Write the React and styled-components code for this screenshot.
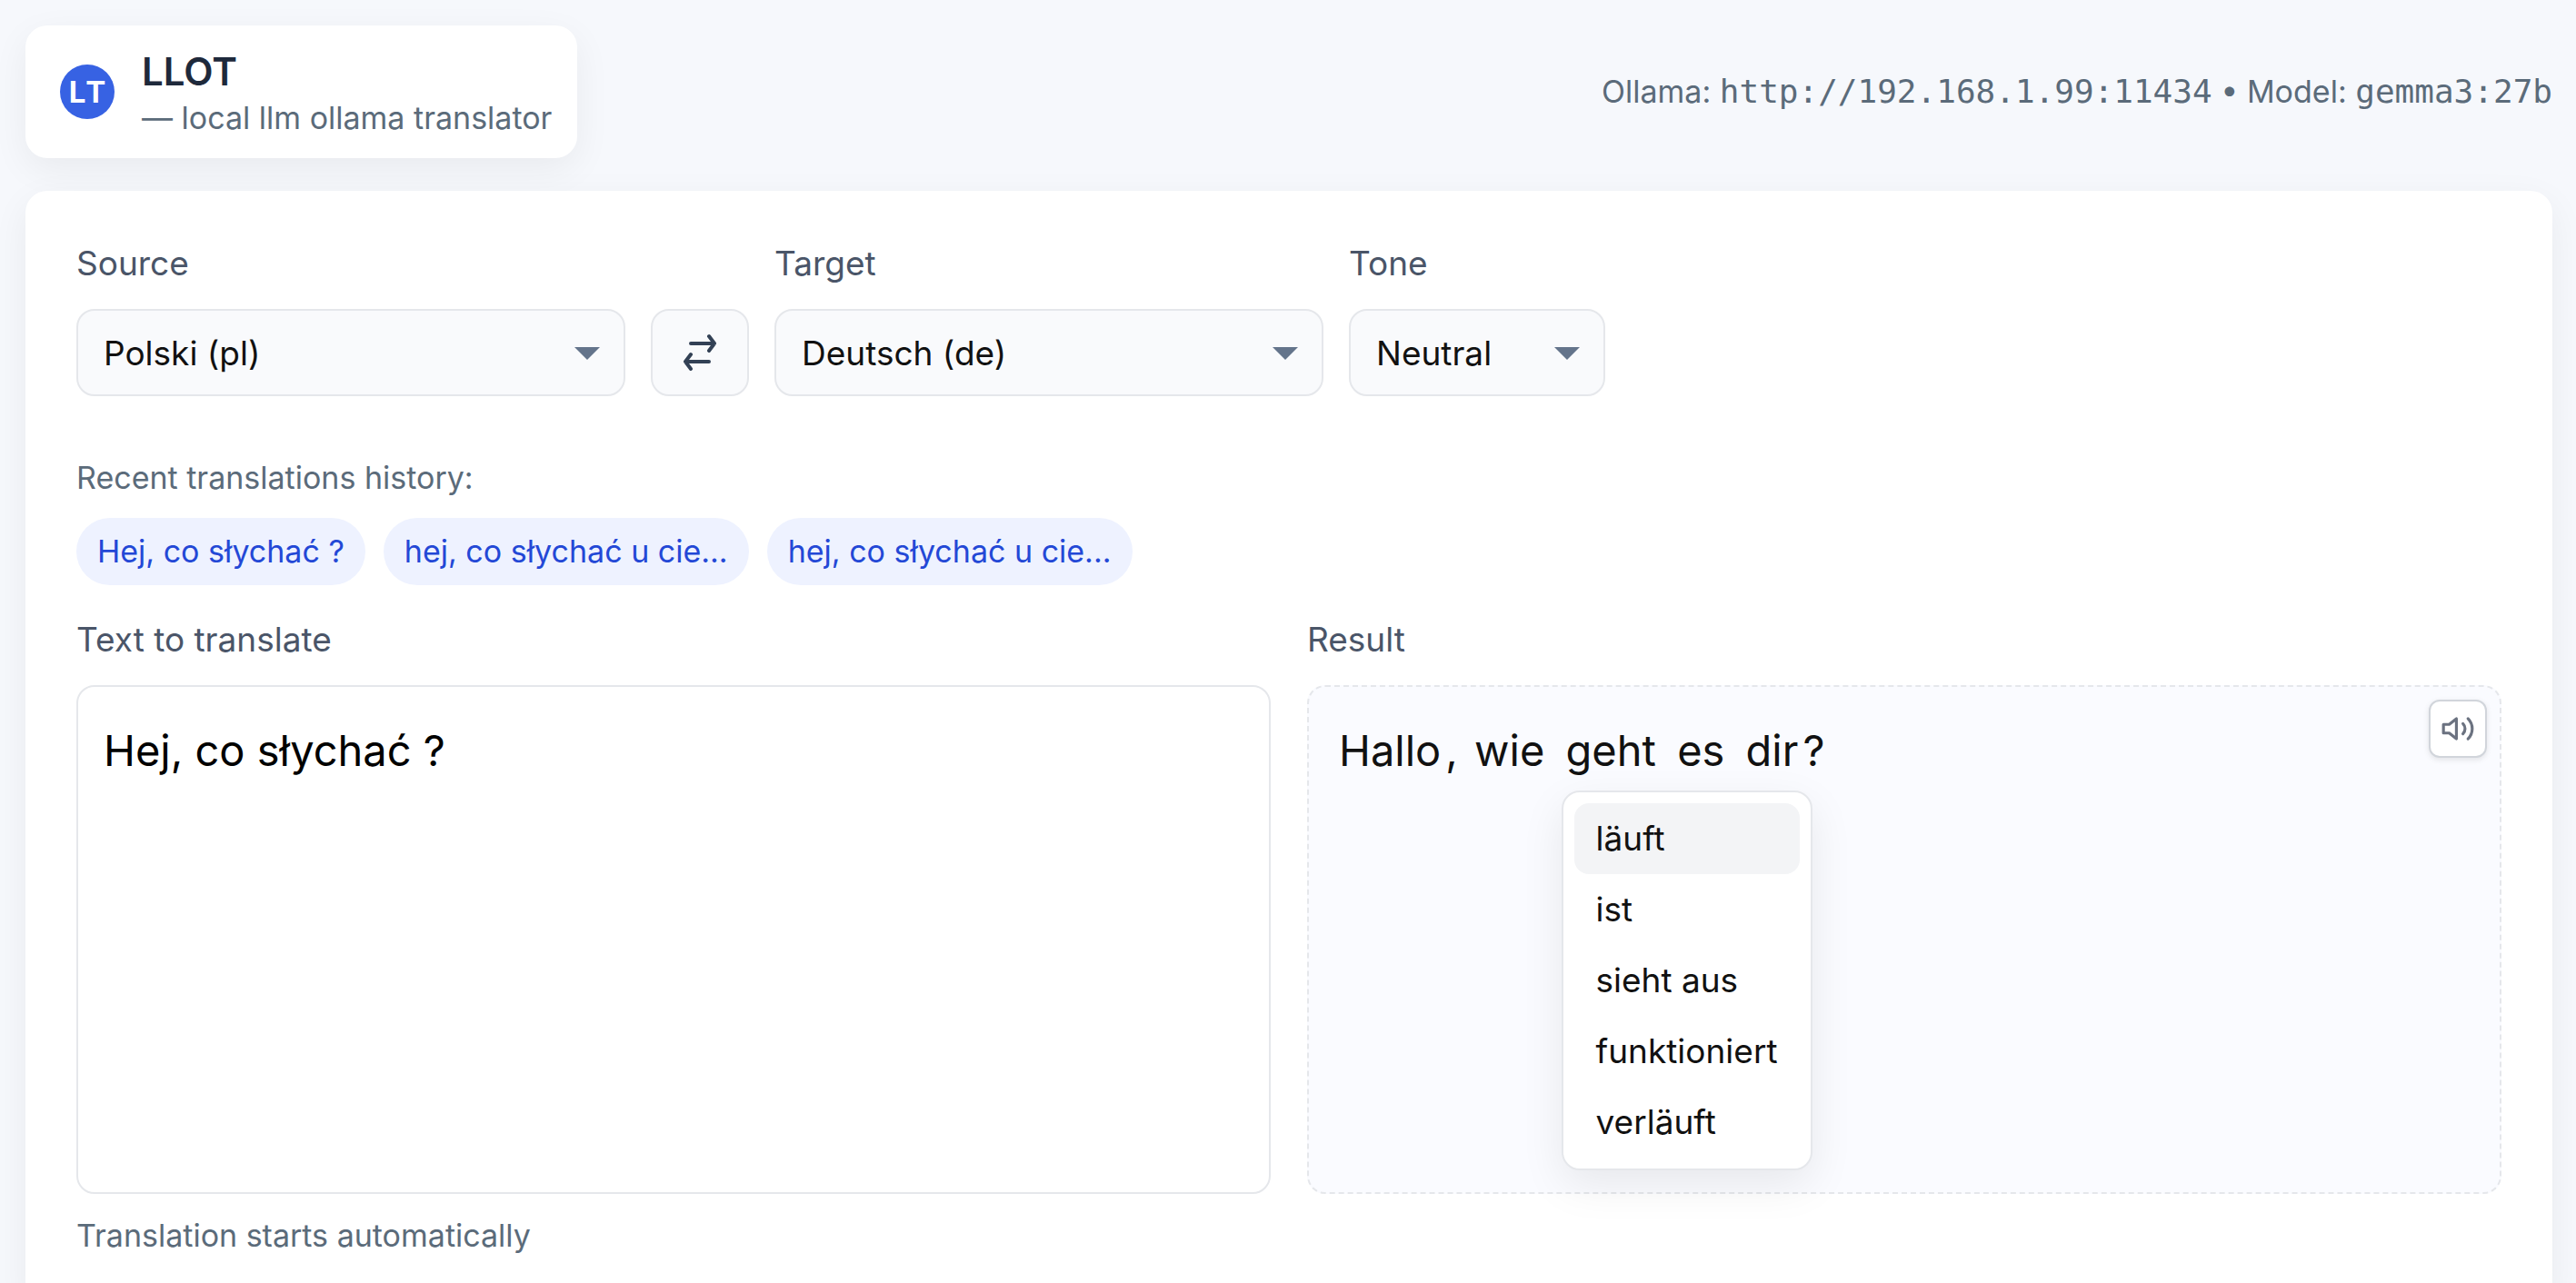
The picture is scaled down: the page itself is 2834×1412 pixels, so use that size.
import React, { useState } from "react";
import styled, { createGlobalStyle } from "styled-components";

const GlobalStyle = createGlobalStyle`
  *, *::before, *::after { box-sizing: border-box; }
  body {
    margin: 0;
    background: #f6f8fc;
    color: #111111;
    font-family: Inter, "Liberation Sans", sans-serif;
    font-size: 37px;
    line-height: 48px;
  }
  button, select, textarea { font: inherit; color: inherit; margin: 0; }
`;

const Page = styled.div`
  display: flex;
  flex-direction: column;
  gap: 36px;
  padding: 28px 26px 28px 28px;
  height: 100vh;
  overflow: hidden;
`;

const Header = styled.header`
  display: flex;
  flex: none;
  align-items: center;
  justify-content: space-between;
`;

const Brand = styled.div`
  display: flex;
  align-items: center;
  gap: 30px;
  height: 146px;
  padding: 0 28px 0 38px;
  background: #ffffff;
  border-radius: 24px;
  box-shadow: 0 12px 40px rgba(0, 0, 0, 0.06);
`;

const BrandText = styled.div`
  padding-top: 4px;
`;

const Logo = styled.div`
  display: grid;
  place-items: center;
  width: 60px;
  height: 60px;
  border-radius: 50%;
  background: #3762e3;
  color: #ffffff;
  font-size: 33px;
  font-weight: 700;
  font-kerning: none;
`;

const Title = styled.h1`
  margin: 0;
  color: #1e293b;
  font-size: 42px;
  font-weight: 600;
  line-height: 54px;
`;

const Muted = styled.p`
  margin: 0;
  color: #5b6b7a;
  font-size: 34px;
  line-height: 48px;
`;

const Code = styled.code`
  font-family: "DejaVu Sans Mono", monospace;
  font-size: 36px;
`;

const Panel = styled.main`
  flex: none;
  padding: 56px;
  background: #ffffff;
  border-radius: 24px;
  box-shadow: 0 12px 40px rgba(0, 0, 0, 0.06);
`;

const Controls = styled.div`
  display: flex;
  align-items: flex-end;
  gap: 28px;
`;

const Field = styled.div`
  display: flex;
  flex-direction: column;
  gap: 26px;
  width: ${(p) => p.$width || "auto"};
`;

const Label = styled.label`
  color: #4a5568;
`;

const SelectBox = styled.div`
  position: relative;

  &::after {
    content: "";
    position: absolute;
    right: 28px;
    top: 42px;
    border: 14px solid transparent;
    border-top-color: #64748b;
    border-bottom-width: 0;
    pointer-events: none;
  }
`;

const Select = styled.select`
  appearance: none;
  width: 100%;
  height: 96px;
  padding: 2px 28px 0;
  border: 2px solid #e5e7eb;
  border-radius: 20px;
  background: #f9fafc;
`;

const SwapButton = styled.button`
  display: grid;
  place-items: center;
  width: 108px;
  height: 96px;
  padding: 0;
  border: 2px solid #e5e7eb;
  border-radius: 20px;
  background: #f9fafc;
  color: #334155;
`;

const History = styled.section`
  display: flex;
  flex-direction: column;
  gap: 20px;
  padding: 66px 0 36px;
`;

const Chips = styled.div`
  display: flex;
  gap: 20px;
`;

const Chip = styled.button`
  height: 74px;
  padding: 0 23px;
  border: 0;
  border-radius: 37px;
  background: #eef2ff;
  color: #2348d6;
  font-size: 34px;
`;

const Columns = styled.div`
  display: grid;
  grid-template-columns: 1fr 1fr;
  gap: 40px;
`;

const Input = styled.textarea`
  display: block;
  width: 100%;
  height: 560px;
  padding: 34px 28px;
  border: 2px solid #e5e7eb;
  border-radius: 20px;
  outline: none;
  resize: none;
  background: #ffffff;
  color: #000000;
  font-size: 47px;
  line-height: 72px;
`;

const Output = styled.div`
  position: relative;
  height: 560px;
  padding: 34px 28px;
  border: 2px dashed #e5e7eb;
  border-radius: 20px;
  background: #fafbff;
  font-size: 47px;
  line-height: 72px;
`;

const Word = styled.span`
  position: relative;
  display: inline-block;
  padding: 0 5px;
`;

const Menu = styled.ul`
  position: absolute;
  left: 0;
  top: 80px;
  z-index: 1;
  margin: 0;
  padding: 12px;
  list-style: none;
  border: 2px solid #e5e7eb;
  border-radius: 20px;
  background: #ffffff;
  box-shadow: 0 16px 48px rgba(0, 0, 0, 0.08);
  font-size: 37px;
  line-height: 48px;
`;

const MenuItem = styled.button`
  display: block;
  width: 100%;
  height: 78px;
  padding: 0 24px;
  border: 0;
  border-radius: 16px;
  background: ${(p) => (p.$active ? "#f3f4f6" : "transparent")};
  text-align: left;
  white-space: nowrap;
`;

const SpeakButton = styled.button`
  position: absolute;
  top: 14px;
  right: 14px;
  display: grid;
  place-items: center;
  width: 64px;
  height: 64px;
  padding: 0;
  border: 2px solid #d1d5db;
  border-radius: 12px;
  background: #ffffff;
  color: #6b7280;
  box-shadow: 0 2px 6px rgba(0, 0, 0, 0.1);
`;

const Hint = styled(Muted)`
  padding-top: 22px;
`;

const SwapIcon = () => (
  <svg width="48" height="48" viewBox="0 0 48 48" fill="none" stroke="currentColor" strokeWidth="4" strokeLinecap="round" strokeLinejoin="round" aria-hidden="true">
    <path d="M14 14h26M34 6l6 8-6 8M34 34H8M14 26l-6 8 6 8" />
  </svg>
);

const SpeakerIcon = () => (
  <svg width="38" height="38" viewBox="0 0 24 24" fill="none" stroke="currentColor" strokeWidth="2" strokeLinecap="round" strokeLinejoin="round" aria-hidden="true">
    <path d="M11 5 6 9H2v6h4l5 4z" />
    <path d="M15.54 8.46a5 5 0 0 1 0 7.07M19.07 4.93a10 10 0 0 1 0 14.14" />
  </svg>
);

const languages = ["Polski (pl)", "Deutsch (de)"];
const tones = ["Neutral"];
const history = ["Hej, co słychać ?", "hej, co słychać u cie...", "hej, co słychać u cie..."];
const alternatives = ["läuft", "ist", "sieht aus", "funktioniert", "verläuft"];

function Picker({ id, label, options, initial, width }) {
  return (
    <Field $width={width}>
      <Label htmlFor={id}>{label}</Label>
      <SelectBox>
        <Select id={id} defaultValue={initial}>
          {options.map((o) => (
            <option key={o}>{o}</option>
          ))}
        </Select>
      </SelectBox>
    </Field>
  );
}

export default function App() {
  const [text, setText] = useState("Hej, co słychać ?");
  return (
    <>
      <GlobalStyle />
      <Page>
        <Header>
          <Brand>
            <Logo>LT</Logo>
            <BrandText>
              <Title>LLOT</Title>
              <Muted>— local llm ollama translator</Muted>
            </BrandText>
          </Brand>
          <Muted>
            Ollama: <Code>http://192.168.1.99:11434</Code> • Model: <Code>gemma3:27b</Code>
          </Muted>
        </Header>
        <Panel>
          <Controls>
            <Picker id="source" label="Source" options={languages} initial="Polski (pl)" width="604px" />
            <SwapButton type="button" aria-label="Swap languages">
              <SwapIcon />
            </SwapButton>
            <Picker id="target" label="Target" options={languages} initial="Deutsch (de)" width="604px" />
            <Picker id="tone" label="Tone" options={tones} initial="Neutral" width="282px" />
          </Controls>
          <History>
            <Muted>Recent translations history:</Muted>
            <Chips>
              {history.map((h, i) => (
                <Chip key={i} type="button">{h}</Chip>
              ))}
            </Chips>
          </History>
          <Columns>
            <Field>
              <Label htmlFor="text">Text to translate</Label>
              <Input id="text" value={text} onChange={(e) => setText(e.target.value)} />
            </Field>
            <Field>
              <Label as="div">Result</Label>
              <Output>
                <Word>Hallo</Word>, <Word>wie</Word>{" "}
                <Word>
                  geht
                  <Menu>
                    {alternatives.map((a, i) => (
                      <li key={a}>
                        <MenuItem type="button" $active={i === 0}>{a}</MenuItem>
                      </li>
                    ))}
                  </Menu>
                </Word>{" "}
                <Word>es</Word> <Word>dir</Word>?
                <SpeakButton type="button" aria-label="Read aloud">
                  <SpeakerIcon />
                </SpeakButton>
              </Output>
            </Field>
          </Columns>
          <Hint>Translation starts automatically</Hint>
        </Panel>
      </Page>
    </>
  );
}
